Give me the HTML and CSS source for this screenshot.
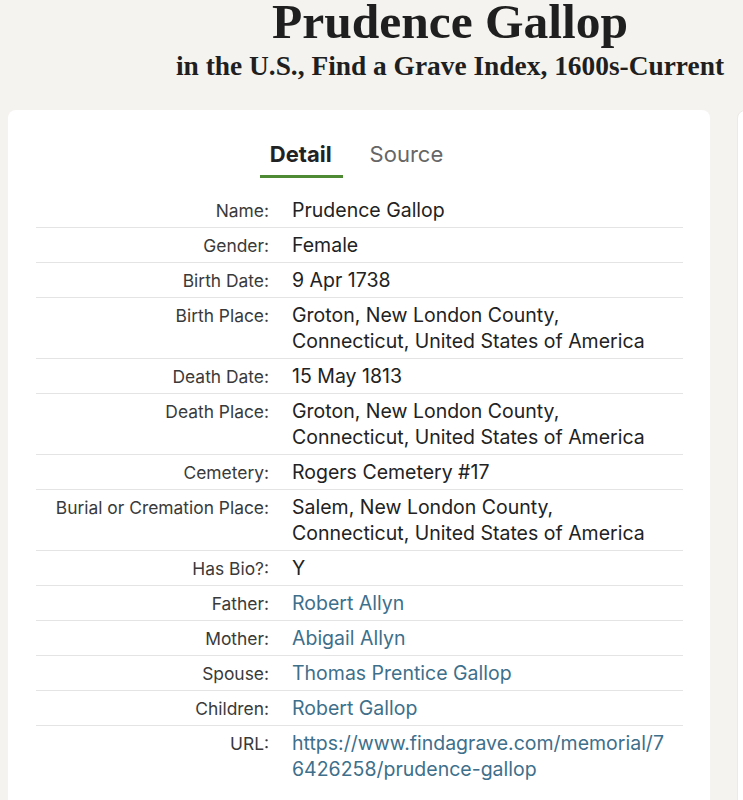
FILE: index.html
```html
<!DOCTYPE html>
<html lang="en">
<head>
<meta charset="utf-8">
<title>Prudence Gallop</title>
<link rel="stylesheet" href="styles.css">
</head>
<body>
<header class="header">
  <h1 class="title">Prudence Gallop</h1>
  <h2 class="subtitle">in the U.S., Find a Grave Index, 1600s-Current</h2>
</header>
<main class="columns">
  <section class="card">
    <nav class="tabs">
      <span class="tab tab-active">Detail</span>
      <span class="tab">Source</span>
    </nav>
    <div class="rows">
      <div class="row"><div class="label">Name:</div><div class="value">Prudence Gallop</div></div>
      <div class="row"><div class="label">Gender:</div><div class="value">Female</div></div>
      <div class="row"><div class="label">Birth Date:</div><div class="value">9 Apr 1738</div></div>
      <div class="row"><div class="label">Birth Place:</div><div class="value">Groton, New London County,<br>Connecticut, United States of America</div></div>
      <div class="row"><div class="label">Death Date:</div><div class="value">15 May 1813</div></div>
      <div class="row"><div class="label">Death Place:</div><div class="value">Groton, New London County,<br>Connecticut, United States of America</div></div>
      <div class="row"><div class="label">Cemetery:</div><div class="value">Rogers Cemetery #17</div></div>
      <div class="row"><div class="label">Burial or Cremation Place:</div><div class="value">Salem, New London County,<br>Connecticut, United States of America</div></div>
      <div class="row"><div class="label">Has Bio?:</div><div class="value">Y</div></div>
      <div class="row"><div class="label">Father:</div><div class="value"><a class="link" href="#">Robert Allyn</a></div></div>
      <div class="row"><div class="label">Mother:</div><div class="value"><a class="link" href="#">Abigail Allyn</a></div></div>
      <div class="row"><div class="label">Spouse:</div><div class="value"><a class="link" href="#">Thomas Prentice Gallop</a></div></div>
      <div class="row"><div class="label">Children:</div><div class="value"><a class="link" href="#">Robert Gallop</a></div></div>
      <div class="row"><div class="label">URL:</div><div class="value"><a class="link" href="#">https://www.findagrave.com/memorial/7<br>6426258/prudence-gallop</a></div></div>
    </div>
  </section>
  <aside class="side-card"></aside>
</main>
</body>
</html>
```
FILE: styles.css
```css
html, body {
  margin: 0;
  padding: 0;
}
body {
  background: #f4f3ef;
  width: 743px;
  height: 800px;
  overflow: hidden;
  font-family: Inter, "Liberation Sans", Arial, sans-serif;
  color: #222;
}
.header {
  padding-left: 157px;
  text-align: center;
  color: #1f1f1f;
}
.title {
  margin: 0;
  font-family: "Liberation Serif", "Times New Roman", serif;
  font-weight: 700;
  font-size: 49.5px;
  line-height: 43px;
}
.subtitle {
  margin: 7px 0 0;
  font-family: "Liberation Serif", "Times New Roman", serif;
  font-weight: 700;
  font-size: 27.4px;
  line-height: 32px;
}
.columns {
  display: flex;
  gap: 27px;
  margin-top: 28px;
  padding-left: 8px;
}
.card {
  flex: 0 0 702px;
  background: #fff;
  border-radius: 8px;
  padding: 31px 27px 40px 28px;
  box-sizing: border-box;
  min-height: 720px;
}
.side-card {
  flex: 0 0 200px;
  background: #fff;
  border: 1px solid #ebeae6;
  border-radius: 8px;
  min-height: 720px;
}
.tabs {
  display: flex;
  justify-content: center;
  gap: 17px;
  padding-right: 6px;
}
.tab {
  padding: 0 10px 8px;
  font-size: 22px;
  line-height: 26px;
  color: #666;
  border-bottom: 3px solid transparent;
}
.tab-active {
  font-weight: 700;
  color: #222;
  padding-right: 11px;
  border-bottom-color: #4e8a34;
}
.rows {
  margin-top: 15px;
}
.row {
  display: grid;
  grid-template-columns: 233px 1fr;
  column-gap: 23px;
  align-items: start;
  padding: 4px 0;
  border-bottom: 1px solid #e4e4e4;
}
.row:last-child {
  border-bottom: none;
}
.label {
  text-align: right;
  font-size: 17.4px;
  line-height: 26px;
  padding-top: 1px;
  height: 25px;
  color: #3a3a3a;
}
.value {
  font-size: 19.5px;
  line-height: 26px;
  color: #222;
}
.link {
  color: #3e6f8b;
  text-decoration: none;
}
```
